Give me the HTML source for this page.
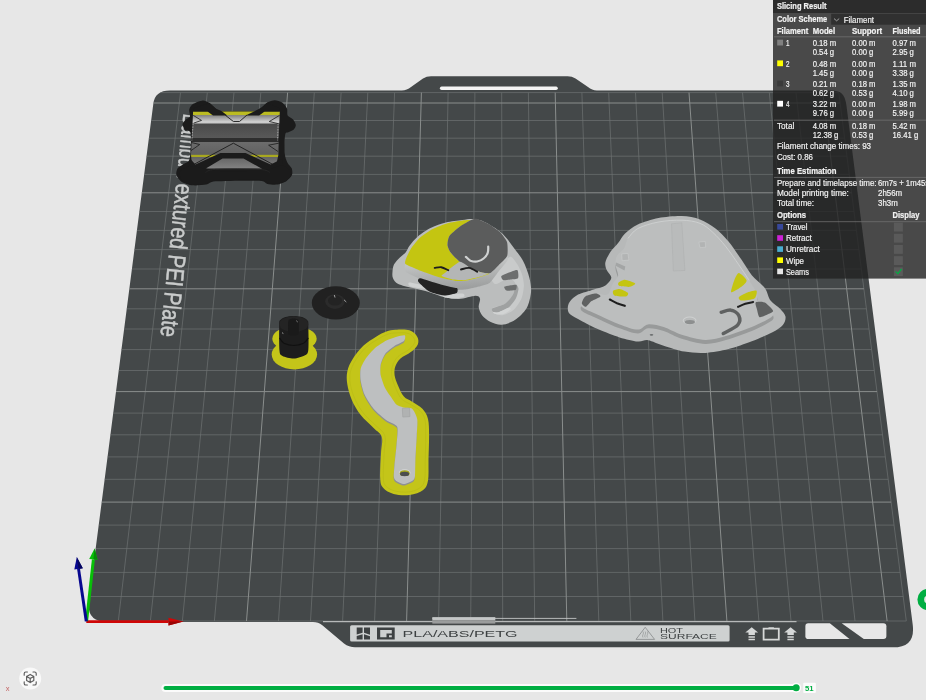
<!DOCTYPE html>
<html><head><meta charset="utf-8"><title>Slicing Result</title>
<style>
html,body{margin:0;padding:0;background:#e7e7e7;overflow:hidden}
body{width:926px;height:700px;position:relative;font-family:"Liberation Sans",sans-serif}
svg{position:absolute;left:0;top:0;display:block;will-change:transform}
text{font-family:"Liberation Sans",sans-serif}
</style></head><body>
<svg width="926" height="700" viewBox="0 0 926 700">
<defs><clipPath id="pc"><path d="M153.3 104 Q154.6 90.4 170 90.4 L401.8 90.4 Q407 90.4 411 87 L423 78.5 Q426.5 76.3 431 76.3 L567.6 76.3 Q572 76.3 575.5 78.5 L588 87 Q592 90.4 596.8 90.4 L831 90.4 C840.5 90.4 845 93.5 846.4 105 L912.7 624.5 C914.6 640 908.5 647.3 893 647.3 L355 647.3 Q349 647.3 344 643.5 L322 625 Q318.5 621.9 313 621.9 L107 621.9 Q85.9 621.9 89 600 Z"/></clipPath></defs>
<path d="M153.3 104 Q154.6 90.4 170 90.4 L401.8 90.4 Q407 90.4 411 87 L423 78.5 Q426.5 76.3 431 76.3 L567.6 76.3 Q572 76.3 575.5 78.5 L588 87 Q592 90.4 596.8 90.4 L831 90.4 C840.5 90.4 845 93.5 846.4 105 L912.7 624.5 C914.6 640 908.5 647.3 893 647.3 L355 647.3 Q349 647.3 344 643.5 L322 625 Q318.5 621.9 313 621.9 L107 621.9 Q85.9 621.9 89 600 Z" fill="#444849"/>
<rect x="439.9" y="86.6" width="117.9" height="3.4" rx="1.7" fill="#f4f4f4"/>
<g clip-path="url(#pc)">
<path d="M118.3 621L180.5 92.6M150.4 621L207.3 92.6M182.4 621L234 92.6M214.4 621L260.8 92.6M278.5 621L314.3 92.6M310.5 621L341.1 92.6M342.6 621L367.8 92.6M374.6 621L394.6 92.6M438.6 621L448.1 92.6M470.7 621L474.9 92.6M502.7 621L501.7 92.6M534.7 621L528.4 92.6M598.8 621L581.9 92.6M630.8 621L608.7 92.6M662.9 621L635.5 92.6M694.9 621L662.2 92.6M758.9 621L715.7 92.6M791 621L742.5 92.6M823 621L769.3 92.6M855 621L796 92.6M906.3 621L838.8 92.6M86.3 621L906.3 621M89.4 596.5L903.2 596.5M92.5 572.4L900.1 572.4M95.6 548.6L897 548.6M98.6 525.1L894 525.1M104.4 479.3L888.2 479.3M107.3 456.9L885.3 456.9M110.1 434.8L882.5 434.8M112.9 413.1L879.7 413.1M118.3 370.5L874.3 370.5M121 349.6L871.6 349.6M123.6 329L869 329M126.2 308.8L866.4 308.8M131.2 269L861.4 269M133.7 249.6L858.9 249.6M136.2 230.4L856.4 230.4M138.6 211.5L854 211.5M143.3 174.4L849.3 174.4M145.6 156.2L847 156.2M147.9 138.2L844.7 138.2M150.2 120.5L842.4 120.5M153.8 92.6L838.8 92.6" stroke="#6f7372" stroke-width="0.7" fill="none"/>
<path d="M246.5 621L287.6 92.6M406.6 621L421.4 92.6M566.8 621L555.2 92.6M726.9 621L689 92.6M887.1 621L822.8 92.6M101.5 502.1L891.1 502.1M115.6 391.6L877 391.6M128.7 288.8L863.9 288.8M141 192.8L851.6 192.8M152.4 103L840.2 103" stroke="#8a8e8d" stroke-width="1" fill="none"/>
</g>
<text transform="translate(183.5 113.3) rotate(95.9)" font-size="24.5" stroke="#c9cbcb" stroke-width="0.5" fill="#c9cbcb" lengthAdjust="spacingAndGlyphs" textLength="68.6">Bambu T</text>
<text transform="translate(176.3 182.9) rotate(95.9)" font-size="24.5" stroke="#c9cbcb" stroke-width="0.5" fill="#c9cbcb" lengthAdjust="spacingAndGlyphs" textLength="154">extured PEI Plate</text>
<path d="M323 621.7H796.5" stroke="#cfd1d1" stroke-width="1"/>
<rect x="432.3" y="617.1" width="63" height="3.2" fill="#c3c5c5"/>
<rect x="432.3" y="620.2" width="63" height="3.4" fill="#9a9c9c"/>
<path d="M432.3 618.4H576.4" stroke="#c4c6c6" stroke-width="0.9"/>
<rect x="350.1" y="625.2" width="379.5" height="16.3" rx="1.5" fill="#ced1d1"/>
<path d="M356.7 627.5h5.9v5.2l-5.9 1.9zM364 627.5h6v7.3l-6-2zM356.7 636.1l5.9-1.9v5.4h-5.9zM364 634.3l6 2v3.3h-6z" fill="#3d4142"/>
<path d="M377 627.5h17.7v12.1H377zM380.2 630h11.6v3.5h-5.3v3.7h-6.3zM389 635.3h2.8v2h-2.8z" fill="#3d4142" fill-rule="evenodd"/>
<text x="402.6" y="637.1" font-size="9.2" fill="#3d4142" textLength="115" lengthAdjust="spacingAndGlyphs">PLA/ABS/PETG</text>
<path d="M645.2 627.3L636 639.4H654.6Z" fill="none" stroke="#7d8081" stroke-width="0.7"/>
<path d="M643 637.5q-1-1.5 0-3t0-3M645.2 637.5q-1-1.5 0-3t0-3M647.4 637.5q-1-1.5 0-3t0-3" fill="none" stroke="#7d8081" stroke-width="0.5"/>
<text x="660" y="632.6" font-size="6.8" fill="#3d4142" textLength="23" lengthAdjust="spacingAndGlyphs">HOT</text>
<text x="660" y="639.4" font-size="6.8" fill="#3d4142" textLength="56.8" lengthAdjust="spacingAndGlyphs">SURFACE</text>
<path d="M751.7 627.2l6.4 5.2h-3.2v2.6h-6.4v-2.6h-3.2zM748.5 636.2h6.4v1.5h-6.4zM748.5 638.8h6.4v1.5h-6.4zM790.6 627.2l6.4 5.2h-3.2v2.6h-6.4v-2.6h-3.2zM787.4 636.2h6.4v1.5h-6.4zM787.4 638.8h6.4v1.5h-6.4z" fill="#d6d8d8"/>
<path d="M763.6 628.6h15.2v11h-15.2z" fill="none" stroke="#d6d8d8" stroke-width="1.8"/>
<path d="M768.5 627.3h5.4v1.3h-5.4z" fill="#d6d8d8"/>
<path d="M808.2 623.3H829.8L849.5 639.1H808.2Q805.4 639.1 805.4 636.3V626.1Q805.4 623.3 808.2 623.3Z" fill="#e7e7e7"/>
<path d="M841.7 623.3H883.4Q886.4 623.3 886.4 626.3V636.1Q886.4 639.1 883.4 639.1H863.8Z" fill="#e7e7e7"/>
<defs><linearGradient id="tw" x1="0" y1="111.3" x2="0" y2="168.3" gradientUnits="userSpaceOnUse">
<stop offset="0.000" stop-color="#bcbc22"/><stop offset="0.067" stop-color="#bcbc22"/><stop offset="0.074" stop-color="#858585"/><stop offset="0.186" stop-color="#d2d2d2"/><stop offset="0.205" stop-color="#c6c6c6"/><stop offset="0.224" stop-color="#4a4a4a"/><stop offset="0.464" stop-color="#585858"/><stop offset="0.476" stop-color="#2e2e2e"/><stop offset="0.536" stop-color="#2e2e2e"/><stop offset="0.543" stop-color="#6c6c6c"/><stop offset="0.757" stop-color="#606060"/><stop offset="0.762" stop-color="#a8a820"/><stop offset="0.793" stop-color="#a8a820"/><stop offset="0.798" stop-color="#626262"/><stop offset="0.988" stop-color="#808080"/>
</linearGradient></defs>
<path d="M189.3 109.3C189.7 107.5 191.5 105 193.3 103.8C195.1 102.6 200.7 100.5 202.8 100.4C205 100.3 207.9 102.1 209.6 103.1C211.3 104.2 214.2 107.5 215.7 108.6C217.3 109.6 215.9 110.7 221.1 111C226.4 111.3 249.6 111.5 255.1 111C260.5 110.5 260.2 108.4 261.9 107.2C263.5 106.1 265.6 103.4 267.3 102.5C269 101.5 272.8 100.2 274.8 100.2C276.7 100.2 280.6 101.3 282.2 102.5C283.8 103.6 286.2 106.9 287 108.6C287.7 110.3 286.8 113.9 287.6 115.4C288.5 116.8 292 118.2 293.1 119.4C294.2 120.7 295.7 123.5 295.8 124.9C295.9 126.2 294.8 128.6 293.8 129.6C292.8 130.6 289.5 131.7 288.3 132.3C287.2 133 285.7 131.8 285.2 134.6C284.7 137.4 284.3 149.6 284.7 153.4C285 157.1 286.7 160.9 287.6 162.9C288.6 164.9 291.1 166.7 291.7 168.3C292.3 169.9 292.7 173.4 292 175.1C291.3 176.8 288.3 179.9 286.3 181.2C284.3 182.5 279.3 184.2 276.8 184.6C274.3 184.9 269.6 184.4 267.3 183.9C264.9 183.4 266 181.1 259.1 180.8C252.3 180.4 222.8 180.8 215.7 181.3C208.7 181.8 209.3 184.1 206.2 184.6C203.1 185.1 195.9 185.6 192.6 185.3C189.4 184.9 184 183.2 181.8 181.9C179.6 180.5 176.9 176.9 176.4 175.1C175.8 173.3 176.8 169.7 177.7 168.3C178.6 166.8 181.6 165.5 183.1 164.2C184.7 163 188.7 162.9 189.7 158.8C190.7 154.7 191.2 137.1 190.6 133.3C190 129.5 186.3 131.5 185.2 130.3C184.1 129.1 182.4 125.6 182.5 124.2C182.6 122.7 184.9 120.4 185.9 119.4C186.9 118.4 189.5 118.1 189.9 116.7C190.4 115.4 188.8 111 189.3 109.3Z" fill="#1b1b1b"/>
<path d="M193.1 111.6L279.8 111.6L278.8 135.7L278.4 154.7L276.1 165.6L261.9 168.6L207.6 168.6L192 165.6L191 154.7Z" fill="url(#tw)"/>
<path d="M209.6 103.1L215.7 108.6L221.8 111.3L227.3 115.6L224.1 115.6L213 115.6L207.6 111.6L193.1 111.6L193.1 108.6Z" fill="#1b1b1b"/>
<path d="M267.3 102.5L261.9 107.2L255.1 111L245.6 115.6L249 115.6L259.1 115.6L264.6 111.6L279.8 111.6L279.8 108.6Z" fill="#1b1b1b"/>
<path d="M225.2 115.1L233.4 121.5L239.5 121.5L246.9 115.1" fill="none" stroke="#1b1b1b" stroke-width="0.9" stroke-linejoin="miter"/>
<path d="M191.3 165.8L233.4 143.2L275.4 165.8" fill="none" stroke="#1b1b1b" stroke-width="0.9"/>
<path d="M188.6 169L190.2 158.8L195.4 164.5L220.5 153.1L245.6 153.1L270.7 164.5L282.2 158.8L283.6 169L263.2 169.4L243.5 158.5L222.5 158.5L204.2 169.4Z" fill="#1b1b1b"/>
<path d="M193.3 115.4L201.5 120.4L193.7 123.1" fill="none" stroke="#1b1b1b" stroke-width="0.8"/>
<path d="M191.3 142.5L199.7 144.5L190.6 150.9" fill="none" stroke="#1b1b1b" stroke-width="0.8"/>
<path d="M279.5 115.4L269.3 121.5L278.8 123.8" fill="none" stroke="#1b1b1b" stroke-width="0.8"/>
<path d="M278.8 143.2L268.6 145.2L278.1 151.6" fill="none" stroke="#1b1b1b" stroke-width="0.8"/>
<path d="M193.1 124.2L191.8 140.5" stroke="#e8e8e8" stroke-width="0.8" stroke-dasharray="0.7 0.9" fill="none"/>
<path d="M278.1 124.2L277.6 140.5" stroke="#e8e8e8" stroke-width="0.8" stroke-dasharray="0.7 0.9" fill="none"/>
<path d="M180.4 171C181.7 169.1 187.8 166.5 191.3 166.3C194.7 166 203 168.3 206.2 169C209.5 169.6 208.7 170.7 215.7 171C222.8 171.3 251.9 171.3 259.1 171C266.4 170.7 266.9 169.7 270 169C273.1 168.2 279.5 165.3 282.2 165.6C284.9 165.8 289.3 169.6 290.4 171C291.4 172.5 291.3 175 290.4 176.4C289.5 177.9 286.3 181 283.6 181.9C280.9 182.8 273.3 183.5 270 183.2C266.7 182.9 266.4 180.2 259.1 179.8C251.9 179.5 223 180 215.7 180.5C208.5 181 208.1 183.4 204.9 183.9C201.6 184.4 194.4 185 191.3 184.6C188.2 184.1 183.2 182.3 181.8 180.5C180.3 178.7 179.2 172.9 180.4 171Z" fill="#1b1b1b"/>
<path d="M205.5 172.4C207.2 171.9 206.8 169.9 215.7 169.4C224.7 168.9 250.1 168.9 259.1 169.4C268.2 169.9 268.2 171.9 270 172.4" fill="none" stroke="#262626" stroke-width="1"/>
<ellipse cx="335.8" cy="302.9" rx="24" ry="16.6" fill="#212121"/>
<ellipse cx="335" cy="301.6" rx="9.8" ry="7.4" fill="#2b2b2b"/>
<ellipse cx="335" cy="300.6" rx="7" ry="5" fill="#232323"/>
<path d="M334.3 295L335 297.5M344 299.8L346.3 302" stroke="#d8d8d8" stroke-width="0.7" fill="none"/>
<ellipse cx="294.5" cy="338.8" rx="22.2" ry="12.3" fill="#c4c519"/>
<ellipse cx="294.4" cy="354.5" rx="22.7" ry="15" fill="#c4c519"/>
<path d="M279.2 324.5C279.3 320.4 279.4 321 280.3 320C281.1 319 283.7 317.6 285.5 317C287.3 316.5 291.5 315.9 293.8 316C296.1 316 300.9 316.7 302.8 317.3C304.6 318 307 319.7 307.7 320.8C308.5 321.8 308.2 321.4 308.3 325.3C308.4 329.2 308.8 346 308.3 350C307.9 354 307 354.1 305 355.3C303.1 356.4 296.8 358.5 293.8 358.6C290.8 358.7 284.4 357.1 282.5 356C280.6 355 279.9 355 279.5 350.8C279.1 346.6 279.1 328.6 279.2 324.5Z" fill="#1d1d1d"/>
<ellipse cx="293.8" cy="324.2" rx="14.5" ry="8" fill="#242424"/>
<path d="M288.2 321.5C288.5 319.7 289.3 319.7 290 319.3C290.8 318.9 292.8 318.5 293.8 318.5C294.8 318.5 296.9 318.9 297.5 319.3C298.2 319.7 298.6 319.7 298.7 321.5C298.9 323.3 299 331 298.7 332.8C298.5 334.6 297.5 334.6 296.8 335C296 335.4 294.2 335.6 293.3 335.6C292.4 335.6 290.7 335.4 290 335C289.3 334.6 288.5 334.6 288.2 332.8C288 331 288 323.3 288.2 321.5Z" fill="#1a1a1a"/>
<path d="M279.5 338C280.3 338.9 281.6 342 284 343.3C286.4 344.5 290.5 345.5 293.8 345.5C297 345.5 301.1 344.5 303.5 343.3C305.9 342 307.5 338.9 308.3 338" fill="none" stroke="#111" stroke-width="1.2"/>
<path d="M296.5 320.9L297.5 321.8M282.2 332.8L283.3 333.5" stroke="#ddd" stroke-width="0.8" fill="none"/>
<path d="M395.4 329.8C399.3 329.6 405.9 329.1 409.5 330.3C413.2 331.4 415.9 334.3 417.2 336.7C418.6 339.1 418.8 341.8 417.8 344.4C416.7 347 413.7 349.8 410.8 352.1C407.9 354.5 403.1 356.2 400.5 358.6C398 360.9 396.4 363.5 395.4 366.3C394.4 369 394.2 372 394.6 375.3C395.1 378.5 396.4 382 398 385.5C399.5 389.1 401.5 393.9 403.9 396.6C406.2 399.3 409 399.7 412.1 401.7C415.2 403.7 419.7 405.8 422.4 408.7C425 411.5 426.9 414.4 428 418.9C429.1 423.4 429 428.6 429.1 435.7C429.1 442.7 428.7 453.9 428.5 461.4C428.4 468.8 428.9 475.8 428 480.6C427.1 485.4 426.2 487.7 423.2 490.1C420.1 492.5 414.5 494.4 409.5 495C404.6 495.7 398 495.2 393.6 494C389.2 492.8 385.3 490.5 383.1 487.8C380.8 485.2 380.6 483.8 380.2 478.1C379.9 472.4 380.7 460.5 381 453.6C381.3 446.8 383 441.2 381.8 436.9C380.5 432.7 377.1 431.6 373.6 427.9C370 424.3 364.3 419.8 360.7 415.1C357.1 410.4 353.9 404.8 351.7 399.7C349.5 394.5 348.1 389 347.3 384.3C346.6 379.5 346.4 375.7 347.3 371.4C348.3 367.1 350.3 362.8 353 358.6C355.6 354.3 359.4 349.3 363.3 345.7C367.1 342.1 372.3 339.1 376.1 336.7C380 334.3 383.2 332.7 386.4 331.6C389.6 330.4 391.5 330 395.4 329.8Z" fill="#c4c519"/>
<path d="M396.2 332.9C399.6 332.7 405.2 332.4 408.2 333.4C411.2 334.3 413.2 336.8 414.2 338.5C415.1 340.2 415.1 341.7 414.2 343.6C413.2 345.6 410.9 347.9 408.2 350.1C405.5 352.2 400.6 353.9 398 356.5C395.4 359.1 393.6 362.3 392.6 365.5C391.5 368.7 391.4 372.2 391.8 375.8C392.2 379.3 393.6 383 395.1 386.8C396.7 390.6 398.8 395.7 401.3 398.6C403.8 401.6 407.2 402.3 410.3 404.3C413.4 406.3 417.4 407.9 419.8 410.5C422.3 413 424 415.5 425 419.7C425.9 423.9 425.7 428.7 425.7 435.7C425.8 442.6 425.4 454.1 425.2 461.4C425 468.6 425.5 475 424.7 479.3C423.9 483.7 422.9 485.5 420.3 487.6C417.7 489.7 413.3 491.4 409 491.9C404.7 492.5 398.5 491.9 394.6 490.9C390.7 489.9 387.5 488 385.6 485.8C383.7 483.5 383.6 482.9 383.3 477.5C383.1 472.2 383.8 460.6 384.1 453.6C384.3 446.7 386.3 440.4 384.9 435.7C383.4 430.9 379.2 429.1 375.6 425.4C372 421.6 366.7 417.5 363.3 413C359.8 408.6 356.9 403.4 354.8 398.6C352.6 393.8 351.1 388.7 350.4 384.3C349.7 379.8 349.5 376 350.4 371.9C351.3 367.8 353.3 363.9 355.8 359.8C358.3 355.8 361.9 351.2 365.6 347.8C369.2 344.3 374 341.5 377.7 339.3C381.3 337 384.3 335.5 387.4 334.4C390.5 333.3 392.7 333 396.2 332.9Z" fill="none" stroke="#b3b410" stroke-width="0.6" opacity="0.7"/>
<path d="M404.7 337C405.5 337.5 404.9 341.4 403.7 342.7C402.4 343.9 396.1 346.3 393.9 347.8C391.7 349.3 386.5 353.4 384.9 355.5C383.4 357.6 381.1 363.3 380.5 365.8C380 368.3 380 374.1 380.5 376.9C381.1 379.6 383.5 386.9 384.9 389.7C386.3 392.6 391.3 399.3 392.6 401.3C394 403.2 395.3 405.5 396.5 406.4C397.7 407.3 401.1 408.5 402.9 409C404.7 409.4 410.3 408.9 411.9 410.3C413.6 411.6 416.5 417.4 417 420.5C417.6 423.7 416.7 432.6 416.5 437.3C416.3 441.9 415.5 455.6 415.2 460.4C415 465.2 415.1 475.8 414.7 478.4C414.3 481 413.2 481.6 411.9 482.5C410.6 483.3 405.5 485.6 403.7 485.6C401.8 485.6 397.1 483.3 396 482.5C394.8 481.6 393.8 480.4 393.7 478.4C393.5 476.4 394.1 469.4 394.4 465.5C394.8 461.6 396.2 449.3 396.5 445C396.8 440.6 398.2 431 397 428.3C395.8 425.6 389 423.9 386.2 421.8C383.4 419.7 375.9 413.3 373.4 410.3C370.8 407.3 365.9 399.4 364.4 396.1C362.9 392.8 361 385 360.5 382C360.1 379 359.9 373 360.5 370.4C361.1 367.9 364 362.5 365.6 360.2C367.3 357.8 372.2 352 374.6 349.9C377 347.8 383.7 343.5 386.2 342.2C388.7 340.8 394.3 338.9 396.5 338.3C398.6 337.7 403.9 336.5 404.7 337Z" fill="#8f9191"/>
<path d="M404.9 335.4C405.7 335.9 405.1 339.8 403.9 341.1C402.6 342.3 396.3 344.7 394.1 346.2C391.9 347.7 386.7 351.8 385.1 353.9C383.6 356 381.3 361.7 380.7 364.2C380.2 366.7 380.2 372.5 380.7 375.3C381.3 378 383.7 385.3 385.1 388.1C386.5 391 391.5 397.7 392.8 399.7C394.2 401.6 395.5 403.9 396.7 404.8C397.9 405.7 401.3 406.9 403.1 407.4C404.9 407.8 410.5 407.3 412.1 408.7C413.8 410 416.7 415.8 417.2 418.9C417.8 422.1 416.9 431 416.7 435.7C416.5 440.3 415.7 454 415.4 458.8C415.2 463.6 415.3 474.2 414.9 476.8C414.5 479.4 413.4 480 412.1 480.9C410.8 481.7 405.7 484 403.9 484C402 484 397.3 481.7 396.2 480.9C395 480 394 478.8 393.9 476.8C393.7 474.8 394.3 467.8 394.6 463.9C395 460 396.4 447.7 396.7 443.4C397 439 398.4 429.4 397.2 426.7C396 424 389.2 422.3 386.4 420.2C383.6 418.1 376.1 411.7 373.6 408.7C371 405.7 366.1 397.8 364.6 394.5C363.1 391.2 361.2 383.4 360.7 380.4C360.3 377.4 360.1 371.4 360.7 368.8C361.3 366.3 364.2 360.9 365.8 358.6C367.5 356.2 372.4 350.4 374.8 348.3C377.2 346.2 383.9 341.9 386.4 340.6C388.9 339.2 394.5 337.3 396.7 336.7C398.8 336.1 404.1 334.9 404.9 335.4Z" fill="#bdbfc0"/>
<ellipse cx="404.7" cy="472.8" rx="5.8" ry="3.5" fill="#d6d8d8"/>
<ellipse cx="404.7" cy="473.2" rx="5" ry="2.9" fill="#a3a51e"/>
<ellipse cx="404.6" cy="474" rx="4.6" ry="2.2" fill="#4b4e4f"/>
<path d="M402.3 408.4L409.5 407.9L410 416.6L402.8 417.1Z" fill="#b0b2b2" stroke="#9a9c9c" stroke-width="0.5"/>
<path d="M392.5 271.7C392.6 269.6 393 266.4 394.1 264.3C395.2 262.1 398.1 259.2 399.9 257.4C401.6 255.6 404.1 254.3 405.6 252.5C407.1 250.7 407.9 247.8 409.7 245.4C411.6 243 414.7 239 417.9 236.4C421.1 233.7 426.9 229.9 431.1 227.8C435.3 225.7 441.2 223.6 445.9 222.4C450.5 221.2 458.3 220.4 462.3 219.9C466.2 219.4 469.2 218.8 472.1 218.9C475.1 219.1 478.5 219.4 482 220.7C485.4 222.1 491.7 225.8 495.1 228.1C498.6 230.5 502.3 233.5 505 236.4C507.7 239.2 510.5 243.3 513.2 247C515.9 250.7 520.7 256.4 523.1 261C525.5 265.6 528.1 272.7 529.3 277.4C530.5 282.1 531.4 287.5 531 292.2C530.5 296.9 528.8 304.5 526.4 308.6C523.9 312.8 518.6 317.7 514.9 320.1C511.2 322.6 505.4 324.5 501.7 324.7C498 325 493.2 323.2 490.2 321.8C487.3 320.4 483.7 317.4 482 315.2C480.3 313 479 309.5 478.7 307C478.4 304.5 480.5 300.5 480 298.8C479.5 297.1 478.6 295.8 475.4 295.8C472.3 295.9 463.7 298.9 459 299.1C454.3 299.3 448.6 298.2 444.2 297.1C439.8 296.1 434.1 293.6 429.4 292.2C424.7 290.9 417.7 289.3 413 288.1C408.3 286.9 401.2 285.5 398.2 284C395.2 282.5 393.8 280.1 393 278.2C392.1 276.4 392.3 273.8 392.5 271.7Z" fill="#bbbdbd"/>
<path d="M490.5 276.1C491 274 496.4 270.5 498.4 268.4C500.5 266.3 504.1 261.7 505.8 260.2C507.5 258.6 509.7 256.3 511.2 256.9C512.8 257.4 515.9 262 517.3 264.3C518.7 266.6 521 271.3 521.9 274.1C522.8 277 524 282.4 523.9 285.6C523.8 288.9 522.8 295.5 521.4 298.8C520 302 516.1 307.8 513.5 310C511 312.1 505 314.7 502.5 315.2C500 315.7 496.2 314.5 494.8 313.6C493.4 312.7 490.8 309.6 492.2 308.3C493.5 307 502.2 305.5 505 303.7C507.8 301.9 511.5 297.2 512.9 294.7C514.3 292.2 515.7 286.8 515.7 284.8C515.6 282.8 514 280.4 512.4 279.9C510.7 279.3 505.7 280.2 503.4 280.7C501.1 281.3 496.9 284.6 495.1 284C493.4 283.4 490.1 278.2 490.5 276.1Z" fill="#c9cbcb"/>
<path d="M492.5 308.3C494.1 307.2 502.3 305.5 505 303.7C507.7 301.9 511.4 297.1 512.9 294.7C514.4 292.2 515.4 286.1 516.2 285.3C516.9 284.5 518.5 287.1 518.5 288.9C518.4 290.7 517 296.3 515.7 298.8C514.3 301.3 510.6 306 508.3 307.8C506 309.6 500.4 311.7 498.4 312.3C496.4 312.8 494 312.5 493.2 311.9C492.4 311.4 490.9 309.4 492.5 308.3Z" fill="#9fa1a1"/>
<path d="M493.2 311.9C493.6 311.7 496.4 312.8 498.4 312.3C500.4 311.7 506.6 308.2 508.3 307.8C509.9 307.4 511.4 308.7 510.7 309.5C510.1 310.3 505.4 313.3 503.4 313.9C501.3 314.5 496.5 314.3 495.1 314.1C493.8 313.8 492.7 312.2 493.2 311.9Z" fill="#d2d4d4"/>
<path d="M501.4 276.1C502.1 275.2 507.2 273.2 509.1 272.5C511 271.8 516.3 269.4 517.3 270C518.4 270.7 518.7 277.2 518 278.2C517.2 279.3 512.5 279.2 510.7 279.4C509 279.6 504.4 280.6 503.4 280.2C502.3 279.8 500.7 277 501.4 276.1Z" fill="#6c6e6e"/>
<path d="M504.2 286.8C504.7 286.2 509.3 285.5 510.7 285.3C512.2 285.1 515.9 284.3 516.5 284.8C517.1 285.3 516.5 289.1 515.8 289.7C515.2 290.4 511.9 290.3 510.7 290.4C509.6 290.5 507.1 291 506.3 290.6C505.5 290.1 503.7 287.4 504.2 286.8Z" fill="#6c6e6e"/>
<path d="M409.4 282.4C411.4 282.3 423.3 285.1 425.3 286C427.4 286.8 426.8 288.9 424.8 288.9C422.9 289 412.6 287.3 410.5 286.5C408.5 285.6 407.4 282.4 409.4 282.4Z" fill="#d0d2d2"/>
<path d="M443.4 295.2C445.7 294.6 459.5 293.3 462.3 293.5C465 293.7 465 296.2 463.9 296.8C462.8 297.5 456.6 298.4 454.1 298.5C451.6 298.5 446.5 297.9 445 297.5C443.6 297 441.1 295.7 443.4 295.2Z" fill="#d0d2d2"/>
<defs><linearGradient id="cw" x1="0" y1="0" x2="0.15" y2="1"><stop offset="0" stop-color="#cfd1d1"/><stop offset="1" stop-color="#9d9f9f"/></linearGradient></defs>
<path d="M405.4 264C406.6 263.8 416.6 269.1 419.6 270.2C422.5 271.3 437.9 276.7 440.9 277.6C443.9 278.5 453.5 280.5 455.7 280.7C457.9 280.9 465.3 280.7 467.2 280.4C469.1 280.1 476.9 278 478.7 277.4C480.6 276.9 487.7 274.8 489.4 273.8C491 272.8 497 267.1 498.4 265.6C499.9 264.1 506.2 256.2 507 255.7C507.7 255.3 508.2 259 507.6 260.2C507 261.4 501.2 268.2 499.7 270C498.3 271.9 491.6 281.3 489.9 282.7C488.1 284.1 480.6 286.1 478.7 286.6C476.8 287.2 469.1 289 467.2 289.3C465.3 289.5 457.9 290.2 455.7 289.9C453.5 289.6 443.9 286.8 440.9 285.8C437.9 284.9 422.5 279.7 419.6 278.6C416.6 277.4 406.9 273.2 405.8 272C404.6 270.8 404.3 264.1 405.4 264Z" fill="url(#cw)"/>
<path d="M420.4 278.2C422.5 278.5 436 283.1 439.3 284C442.6 284.9 451.4 287.2 453.2 287.6C455.1 288.1 457 287.9 457.4 288.4C457.7 289 458 292.2 456.7 292.9C455.4 293.6 446.9 295.6 444.2 295.5C441.5 295.4 432 292.9 429.4 291.6C426.8 290.2 419.2 283 418.3 281.7C417.4 280.4 418.3 278 420.4 278.2Z" fill="#232323"/>
<path d="M405.4 264C404.3 262.9 405.9 259.1 406.4 257.7C406.9 256.4 410.2 249.6 411.4 247.9C412.5 246.1 418.6 238.8 420.4 237.2C422.2 235.6 430.5 230.1 432.7 229C435 227.8 445 223.9 447.5 223.2C450 222.5 460.4 220.7 462.3 220.4C464.2 220.2 470.8 219.7 470.5 220.3C470.2 220.8 460.8 226 459 227.3C457.2 228.7 450.1 234.9 449.1 236.4C448.2 237.9 447.4 244 447.5 245.4C447.6 246.8 449.8 251.4 450.8 252.8C451.8 254.2 458 260.5 459.8 261.8C461.6 263.2 470.3 268.3 472.1 269.2C474 270.1 480.6 272.1 482 272.5C483.4 272.9 489.7 273.4 489.4 273.8C489.1 274.2 480.6 277 478.7 277.6C476.9 278.2 469.1 280.3 467.2 280.5C465.3 280.8 457.9 281.1 455.7 280.9C453.5 280.6 443.9 278.6 440.9 277.8C437.9 276.9 422.5 271.5 419.6 270.4C416.6 269.2 406.5 265 405.4 264Z" fill="#c4c511"/>
<path d="M470.5 220.3C472.3 219.4 475.3 218.6 477.1 218.9C478.9 219.3 486.3 222.7 488.6 224C490.9 225.4 498.2 230.4 500.1 232.2C501.9 234.1 506.3 239.7 507 242.1C507.7 244.5 508 253.7 507.1 256.1C506.3 258.4 500.1 263.7 498.4 265.4C496.7 267.1 491.9 272.3 490.2 273C488.6 273.7 483.8 272.9 482 272.5C480.2 272.1 474.4 270.3 472.1 269.2C469.9 268.1 462 263.5 459.8 261.8C457.7 260.2 452 254.4 450.8 252.8C449.6 251.1 447.7 247 447.5 245.4C447.3 243.7 448 238.2 449.1 236.4C450.3 234.5 456.9 228.9 459 227.3C461.1 225.7 468.7 221.1 470.5 220.3Z" fill="#5b5c5c"/>
<path d="M459.8 261.8C462 261.5 470.3 268.3 472.1 269.2C474 270.1 480.6 272.1 482 272.5C483.4 272.9 488.8 273.4 488.6 273.8C488.3 274.2 480.6 276.6 478.7 277.1C476.8 277.6 467.8 279.9 465.6 280.1C463.4 280.2 454.4 279.7 452.4 279.4C450.4 279.1 442.2 276.7 441.6 276.1C441 275.5 444 273.7 445.5 272.5C447 271.3 457.6 262.1 459.8 261.8Z" fill="#b4b6b6"/>
<path d="M465.9 256.9C466.7 257.5 468.6 259.9 470.5 260.7C472.4 261.4 474.9 261.8 477.1 261.5C479.3 261.1 481.9 260 483.6 258.5C485.4 257.1 487 254.8 487.7 252.8C488.5 250.8 488.2 247.6 488.2 246.5" fill="none" stroke="#cfd1d1" stroke-width="2.2" stroke-linecap="round"/>
<path d="M434.7 267.9C435.8 267.8 439 266.9 441.3 267.2C443.5 267.6 447.1 269.7 448.3 270.2" fill="none" stroke="#1e1e1e" stroke-width="1.9" stroke-linecap="round"/>
<path d="M461 269.5C462.3 269.3 466.5 267.5 469.2 267.9C471.9 268.3 475.8 271 477.1 271.7" fill="none" stroke="#1e1e1e" stroke-width="1.9" stroke-linecap="round"/>
<path d="M567.8 308.9C567.7 307 568 304 569.6 301.9C571.1 299.7 574.5 296.5 578.1 294.6C581.8 292.7 589.6 290.8 593.7 289.4C597.8 288.1 602.7 287.3 605.4 285.5C608 283.8 611.1 280.1 611.3 277.8C611.5 275.4 607.6 272.3 606.7 270C605.8 267.7 604.8 264.9 605.4 262.2C605.9 259.5 608.6 254.8 610.5 251.8C612.5 248.9 616.2 245.5 618.3 242.8C620.5 240 621.9 236.4 624.8 233.7C627.7 231 632.7 227 637.8 224.6C642.8 222.3 651.9 219.4 658.5 218.1C665.1 216.9 675.6 215.9 681.8 216.1C688 216.3 694.9 217.6 700 219.4C705 221.3 711.2 225.2 715.5 228.5C719.8 231.8 724.6 236.8 728.5 241.5C732.4 246.1 737.9 254.6 741.4 259.6C744.9 264.7 748.3 270.9 751.8 275.2C755.3 279.4 762 284.3 764.8 288.1C767.6 291.9 768.1 297.5 770.5 300.6C772.8 303.7 778.1 306.5 780.3 308.9C782.6 311.3 785.1 314.2 785.5 316.6C785.9 319.1 784.9 322.6 782.9 324.9C781 327.3 777.2 329.7 772.5 332.2C767.9 334.6 758.4 338.7 751.8 341.3C745.2 343.8 735.5 347.3 728.5 349C721.5 350.8 711.8 352.5 705.2 352.9C698.5 353.3 690.6 352.7 684.4 351.6C678.2 350.5 669.1 347.4 663.7 345.7C658.2 344 652 340.9 648.1 340.2C644.2 339.6 642 342 637.8 341.5C633.5 341.1 625.4 339.2 619.6 337.4C613.8 335.6 604.7 332.1 598.9 329.6C593 327.1 585 322.8 580.7 320.5C576.5 318.3 572.3 316.3 570.4 314.6C568.4 312.8 567.9 310.8 567.8 308.9Z" fill="#b7b9b9"/>
<path d="M580.7 307.6C580.9 306 582.3 302.9 584.6 301.4C587 299.8 592.9 297.6 596.3 297.2C599.7 296.8 604.9 300.1 607.4 298.5C610 297 611.5 289.7 613.1 286.8C614.7 284 617.7 282.3 618.1 279.6C618.4 276.9 615.6 271.7 615.5 268.7C615.3 265.7 615.7 262.2 617 259.6C618.3 257.1 622.6 254.5 624.3 251.9C625.9 249.2 625.9 245.2 627.9 242.3C629.9 239.3 633.2 234.9 637.8 232.4C642.3 230 651.9 227.2 658.5 225.9C665.1 224.7 675.6 223.9 681.8 224.1C688 224.3 695.3 225.4 700 227.2C704.6 229.1 709 232.8 712.9 236.3C716.8 239.8 722 245.7 725.9 250.6C729.8 255.4 735.3 263.6 738.8 268.7C742.3 273.8 746.5 280 749.2 284.3C751.9 288.5 755.7 294 757 297.2C758.2 300.4 756 304 757.5 305.5C759.1 307.1 765 306.1 767.4 307.6C769.7 309.1 772.5 313.3 773.1 315.4C773.6 317.4 774.4 318.7 771.2 321.1C768.1 323.4 758.6 328.1 751.8 330.9C745 333.7 732.9 338 725.9 340C718.9 341.9 711.8 344.1 705.2 343.9C698.5 343.7 688 340.6 681.8 338.7C675.6 336.7 668.7 332.5 663.7 330.9C658.6 329.4 652 327.9 648.1 328.3C644.2 328.7 642 333.5 637.8 333.5C633.5 333.5 625.4 330.5 619.6 328.3C613.8 326.2 604.3 321.7 598.9 319.2C593.4 316.8 586 313.7 583.3 312C580.6 310.2 580.5 309.2 580.7 307.6Z" fill="#989a9a"/>
<path d="M580.7 303.7C580.9 302.1 582.3 299 584.6 297.5C587 295.9 592.9 293.7 596.3 293.3C599.7 292.9 604.9 296.2 607.4 294.6C610 293.1 611.5 285.8 613.1 282.9C614.7 280.1 617.7 278.4 618.1 275.7C618.4 273 615.6 267.8 615.5 264.8C615.3 261.8 615.7 258.3 617 255.7C618.3 253.2 622.6 250.6 624.3 248C625.9 245.3 625.9 241.3 627.9 238.4C629.9 235.4 633.2 231 637.8 228.5C642.3 226.1 651.9 223.3 658.5 222C665.1 220.8 675.6 220 681.8 220.2C688 220.4 695.3 221.5 700 223.3C704.6 225.2 709 228.9 712.9 232.4C716.8 235.9 722 241.8 725.9 246.7C729.8 251.5 735.3 259.7 738.8 264.8C742.3 269.9 746.5 276.1 749.2 280.4C751.9 284.6 755.7 290.1 757 293.3C758.2 296.5 756 300.1 757.5 301.6C759.1 303.2 765 302.2 767.4 303.7C769.7 305.2 772.5 309.4 773.1 311.5C773.6 313.5 774.4 314.8 771.2 317.2C768.1 319.5 758.6 324.2 751.8 327C745 329.8 732.9 334.1 725.9 336.1C718.9 338 711.8 340.2 705.2 340C698.5 339.8 688 336.7 681.8 334.8C675.6 332.8 668.7 328.6 663.7 327C658.6 325.5 652 324 648.1 324.4C644.2 324.8 642 329.6 637.8 329.6C633.5 329.6 625.4 326.6 619.6 324.4C613.8 322.3 604.3 317.8 598.9 315.3C593.4 312.9 586 309.8 583.3 308.1C580.6 306.3 580.5 305.3 580.7 303.7Z" fill="#bcbebe"/>
<path d="M627.9 238.4C629.6 236.7 632.7 231.2 637.8 228.5C642.9 225.8 651.2 223.4 658.5 222C665.8 220.6 674.9 220 681.8 220.2C688.7 220.4 694.8 221.3 700 223.3C705.2 225.4 708.6 228.5 712.9 232.4C717.2 236.3 721.6 241.3 725.9 246.7C730.2 252.1 735 259.2 738.8 264.8C742.7 270.4 747.5 277.8 749.2 280.4" fill="none" stroke="#d2d4d4" stroke-width="0.8"/>
<path d="M671.5 223.8L681.8 222.8L684.9 270.5L673.3 271Z" fill="#b9bbbb" stroke="#adafaf" stroke-width="0.5"/>
<path d="M698.9 242L705.2 241.5L705.7 247.2L700 247.7Z" fill="#b2b4b4" stroke="#cfd1d1" stroke-width="0.5"/>
<path d="M621.7 253.9L627.9 253.4L628.9 260.1L622.2 260.7Z" fill="#b2b4b4" stroke="#cfd1d1" stroke-width="0.5"/>
<path d="M616.2 262.5L625.3 266.6L624.5 270.5L615.7 265.8Z" fill="#a3a5a5"/>
<ellipse cx="689.6" cy="320.5" rx="6.8" ry="4" fill="#cfd1d1"/>
<ellipse cx="689.6" cy="320.8" rx="5.9" ry="3.3" fill="#b9bbbb"/>
<ellipse cx="689.9" cy="322.1" rx="5" ry="2.1" fill="#8d8f8f"/>
<ellipse cx="651.5" cy="334.8" rx="1.8" ry="0.9" fill="#6a6d6e"/>
<path d="M618.3 282.9C618.9 282.2 622.8 279.8 624.8 279.8C626.8 279.9 634.6 282.6 635.2 283.5C635.8 284.3 631.8 286.5 630 286.8C628.2 287.1 621 286.5 619.6 286.1C618.3 285.6 617.7 283.7 618.3 282.9Z" fill="#c4c511"/>
<path d="M613.1 290.7C613.7 290 617.9 288.7 619.6 288.9C621.3 289.1 627.2 291.9 627.9 292.8C628.7 293.7 627.7 296.1 626.1 296.4C624.5 296.7 615.9 296.1 614.4 295.4C612.9 294.7 612.5 291.5 613.1 290.7Z" fill="#c4c511"/>
<path d="M731.1 290.7C731.3 289.4 733.3 282.4 734.2 280.4C735.1 278.3 737.4 273.1 738.8 273.1C740.3 273.1 746.3 278.7 746.6 280.4C746.9 282 743.1 285.5 741.4 286.8C739.8 288.2 733.6 291.6 732.4 292C731.2 292.5 730.9 292.1 731.1 290.7Z" fill="#c4c511"/>
<path d="M738.8 297.2C739.5 296.3 744.6 293.6 746.6 292.8C748.7 292 755.6 290.1 756.5 290.7C757.4 291.4 756.2 297.3 754.4 298.5C752.6 299.6 743.3 300.7 741.4 300.6C739.6 300.4 738.2 298.1 738.8 297.2Z" fill="#c4c511"/>
<path d="M581.8 303.2C581.7 302 583.8 297.5 585.4 296.4C587 295.3 594 293.6 595.8 293.6C597.5 293.6 600.9 295.5 600.4 296.4C600 297.3 593.3 299.9 591.6 301.1C589.9 302.3 587.1 306.5 585.9 306.8C584.8 307 581.8 304.4 581.8 303.2Z" fill="#5f6161"/>
<path d="M755.7 302.4C756.6 301.6 762.7 301.6 764.8 302.6C766.8 303.6 772.8 309.5 773.1 310.9C773.4 312.3 768.9 313.8 767.4 314.6C765.8 315.3 760.8 317.8 759.6 317.2C758.4 316.6 757.4 311.1 757 309.4C756.5 307.7 754.8 303.2 755.7 302.4Z" fill="#5f6161"/>
<path d="M609.8 299.5C611 300.1 614.5 302.1 617 303.2C619.5 304.2 623.5 305.3 624.8 305.8" fill="none" stroke="#1e1e1e" stroke-width="2.1" stroke-linecap="round"/>
<path d="M738.1 306.8C739.3 306.3 742.8 304.5 745.3 303.7C747.8 302.9 751.8 302.4 753.1 302.1" fill="none" stroke="#1e1e1e" stroke-width="2.1" stroke-linecap="round"/>
<path d="M721.2 312.2C722.9 311.9 728.1 309.6 731.1 310.2C734 310.7 737.7 313.1 738.8 315.6C740 318.1 740.4 322 737.8 324.9C735.2 327.9 725.7 332.1 723.3 333.5" fill="none" stroke="#5f6161" stroke-width="3.5" stroke-linecap="round"/>
<path d="M86.3 622.9L168.5 622.9L168.5 620.3L86.3 620.3Z" fill="#cf0606"/>
<path d="M168.5 625.5L183.5 621.6L168.5 617.7Z" fill="#cf0606"/>
<path d="M168.5 625.5L183.5 621.6L168.5 621.6Z" fill="#9a0404"/>
<path d="M88.1 621.2L94.9 559.5L91.9 559.2L85.1 620.8Z" fill="#08bf08"/>
<path d="M97.6 559.8L94.6 548.4L89.2 558.9Z" fill="#08bf08"/>
<path d="M97.6 559.8L94.6 548.4L93.4 559.3Z" fill="#078a07"/>
<path d="M87.8 621.2L80 568.7L77.1 569.1L84.8 621.6Z" fill="#07078f"/>
<path d="M82.8 568.2L76.8 557L74.3 569.5Z" fill="#07078f"/>
<path d="M82.8 568.2L76.8 557L78.6 568.9Z" fill="#04045c"/>
<circle cx="927.95" cy="599.5" r="7.2" fill="none" stroke="#00ae42" stroke-width="6.7"/>
<rect x="161.4" y="683.9" width="639" height="8.2" rx="4.1" fill="#fbfbfb"/>
<circle cx="796.2" cy="687.8" r="5" fill="#fbfbfb"/>
<rect x="163.5" y="686" width="633" height="4" rx="2" fill="#00ae42"/>
<circle cx="796.2" cy="687.8" r="3.5" fill="#00ae42"/>
<rect x="803.2" y="682.7" width="12.7" height="10.2" rx="1" fill="#fbfbfb"/>
<text x="805" y="690.5" font-size="7.8" font-weight="bold" fill="#00ae42" textLength="8.6" lengthAdjust="spacingAndGlyphs">51</text>
<circle cx="30.2" cy="678.5" r="11" fill="#f9f9f9"/>
<g fill="none" stroke="#5c5c5c" stroke-width="1.15" stroke-linecap="round" stroke-linejoin="round">
<path d="M24.2 675.2v-1.6q0-1.6 1.6-1.6h1.6M33 672h1.6q1.6 0 1.6 1.600v1.600M36.200 681.800v1.600q0 1.600-1.600 1.600h-1.600M27.400 685h-1.600q-1.600 0-1.600-1.600v-1.600"/>
<path d="M30.200 674.400l3.600 2v4.200l-3.600 2-3.600-2v-4.200zM26.600 676.400l3.600 2 3.600-2M30.200 678.400v4.200"/>
</g>
<text x="5.8" y="691.3" font-size="7.5" fill="#c46464">x</text>
<rect x="773" y="0" width="153" height="278.6" fill="rgba(34,34,34,0.8)"/>
<rect x="773" y="0" width="153" height="13" fill="#2c2c2c"/>
<rect x="831.2" y="13.8" width="94.8" height="10.9" fill="#303030"/>
<text x="776.9" y="8.6" font-size="8.4" font-weight="bold" stroke="#f2f2f2" stroke-width="0.2" fill="#f2f2f2" textLength="49.6" lengthAdjust="spacingAndGlyphs">Slicing Result</text>
<text x="776.9" y="21.6" font-size="8.4" font-weight="bold" stroke="#f2f2f2" stroke-width="0.2" fill="#f2f2f2" textLength="50.4" lengthAdjust="spacingAndGlyphs">Color Scheme</text>
<path d="M834 18.6l2.6 2.2 2.600-2.200" fill="none" stroke="#d0d0d0" stroke-width="0.7"/>
<text x="843.8" y="22.8" font-size="8.2" stroke="#f2f2f2" stroke-width="0.18" fill="#f2f2f2" textLength="30.2" lengthAdjust="spacingAndGlyphs">Filament</text>
<text x="776.9" y="34" font-size="8.4" font-weight="bold" stroke="#f2f2f2" stroke-width="0.2" fill="#f2f2f2" textLength="31.4" lengthAdjust="spacingAndGlyphs">Filament</text>
<text x="812.7" y="34" font-size="8.4" font-weight="bold" stroke="#f2f2f2" stroke-width="0.2" fill="#f2f2f2" textLength="22.4" lengthAdjust="spacingAndGlyphs">Model</text>
<text x="852" y="34" font-size="8.4" font-weight="bold" stroke="#f2f2f2" stroke-width="0.2" fill="#f2f2f2" textLength="30.1" lengthAdjust="spacingAndGlyphs">Support</text>
<text x="892.5" y="34" font-size="8.4" font-weight="bold" stroke="#f2f2f2" stroke-width="0.2" fill="#f2f2f2" textLength="28.1" lengthAdjust="spacingAndGlyphs">Flushed</text>
<path d="M774 36.8H926" stroke="#6e6e6e" stroke-width="0.8"/>
<rect x="777.2" y="39.7" width="5.8" height="5.8" fill="#808080"/>
<text x="785.9" y="45.8" font-size="8.2" stroke="#f2f2f2" stroke-width="0.18" fill="#f2f2f2" textLength="3.5" lengthAdjust="spacingAndGlyphs">1</text>
<text x="812.7" y="45.8" font-size="8.2" stroke="#f2f2f2" stroke-width="0.18" fill="#f2f2f2" textLength="23.5" lengthAdjust="spacingAndGlyphs">0.18 m</text>
<text x="852" y="45.8" font-size="8.2" stroke="#f2f2f2" stroke-width="0.18" fill="#f2f2f2" textLength="23.5" lengthAdjust="spacingAndGlyphs">0.00 m</text>
<text x="892.5" y="45.8" font-size="8.2" stroke="#f2f2f2" stroke-width="0.18" fill="#f2f2f2" textLength="23.5" lengthAdjust="spacingAndGlyphs">0.97 m</text>
<text x="812.7" y="55.1" font-size="8.2" stroke="#f2f2f2" stroke-width="0.18" fill="#f2f2f2" textLength="21.4" lengthAdjust="spacingAndGlyphs">0.54 g</text>
<text x="852" y="55.1" font-size="8.2" stroke="#f2f2f2" stroke-width="0.18" fill="#f2f2f2" textLength="21.4" lengthAdjust="spacingAndGlyphs">0.00 g</text>
<text x="892.5" y="55.1" font-size="8.2" stroke="#f2f2f2" stroke-width="0.18" fill="#f2f2f2" textLength="21.4" lengthAdjust="spacingAndGlyphs">2.95 g</text>
<rect x="777.2" y="60.4" width="5.8" height="5.8" fill="#ffff00"/>
<text x="785.9" y="66.5" font-size="8.2" stroke="#f2f2f2" stroke-width="0.18" fill="#f2f2f2" textLength="3.5" lengthAdjust="spacingAndGlyphs">2</text>
<text x="812.7" y="66.5" font-size="8.2" stroke="#f2f2f2" stroke-width="0.18" fill="#f2f2f2" textLength="23.5" lengthAdjust="spacingAndGlyphs">0.48 m</text>
<text x="852" y="66.5" font-size="8.2" stroke="#f2f2f2" stroke-width="0.18" fill="#f2f2f2" textLength="23.5" lengthAdjust="spacingAndGlyphs">0.00 m</text>
<text x="892.5" y="66.5" font-size="8.2" stroke="#f2f2f2" stroke-width="0.18" fill="#f2f2f2" textLength="23.5" lengthAdjust="spacingAndGlyphs">1.11 m</text>
<text x="812.7" y="75.8" font-size="8.2" stroke="#f2f2f2" stroke-width="0.18" fill="#f2f2f2" textLength="21.4" lengthAdjust="spacingAndGlyphs">1.45 g</text>
<text x="852" y="75.8" font-size="8.2" stroke="#f2f2f2" stroke-width="0.18" fill="#f2f2f2" textLength="21.4" lengthAdjust="spacingAndGlyphs">0.00 g</text>
<text x="892.5" y="75.8" font-size="8.2" stroke="#f2f2f2" stroke-width="0.18" fill="#f2f2f2" textLength="21.4" lengthAdjust="spacingAndGlyphs">3.38 g</text>
<rect x="777.2" y="80.6" width="5.8" height="5.8" fill="#3a3a3a"/>
<text x="785.9" y="86.7" font-size="8.2" stroke="#f2f2f2" stroke-width="0.18" fill="#f2f2f2" textLength="3.5" lengthAdjust="spacingAndGlyphs">3</text>
<text x="812.7" y="86.7" font-size="8.2" stroke="#f2f2f2" stroke-width="0.18" fill="#f2f2f2" textLength="23.5" lengthAdjust="spacingAndGlyphs">0.21 m</text>
<text x="852" y="86.7" font-size="8.2" stroke="#f2f2f2" stroke-width="0.18" fill="#f2f2f2" textLength="23.5" lengthAdjust="spacingAndGlyphs">0.18 m</text>
<text x="892.5" y="86.7" font-size="8.2" stroke="#f2f2f2" stroke-width="0.18" fill="#f2f2f2" textLength="23.5" lengthAdjust="spacingAndGlyphs">1.35 m</text>
<text x="812.7" y="96" font-size="8.2" stroke="#f2f2f2" stroke-width="0.18" fill="#f2f2f2" textLength="21.4" lengthAdjust="spacingAndGlyphs">0.62 g</text>
<text x="852" y="96" font-size="8.2" stroke="#f2f2f2" stroke-width="0.18" fill="#f2f2f2" textLength="21.4" lengthAdjust="spacingAndGlyphs">0.53 g</text>
<text x="892.5" y="96" font-size="8.2" stroke="#f2f2f2" stroke-width="0.18" fill="#f2f2f2" textLength="21.4" lengthAdjust="spacingAndGlyphs">4.10 g</text>
<rect x="777.2" y="100.8" width="5.8" height="5.8" fill="#ffffff"/>
<text x="785.9" y="106.9" font-size="8.2" stroke="#f2f2f2" stroke-width="0.18" fill="#f2f2f2" textLength="3.5" lengthAdjust="spacingAndGlyphs">4</text>
<text x="812.7" y="106.9" font-size="8.2" stroke="#f2f2f2" stroke-width="0.18" fill="#f2f2f2" textLength="23.5" lengthAdjust="spacingAndGlyphs">3.22 m</text>
<text x="852" y="106.9" font-size="8.2" stroke="#f2f2f2" stroke-width="0.18" fill="#f2f2f2" textLength="23.5" lengthAdjust="spacingAndGlyphs">0.00 m</text>
<text x="892.5" y="106.9" font-size="8.2" stroke="#f2f2f2" stroke-width="0.18" fill="#f2f2f2" textLength="23.5" lengthAdjust="spacingAndGlyphs">1.98 m</text>
<text x="812.7" y="116.2" font-size="8.2" stroke="#f2f2f2" stroke-width="0.18" fill="#f2f2f2" textLength="21.4" lengthAdjust="spacingAndGlyphs">9.76 g</text>
<text x="852" y="116.2" font-size="8.2" stroke="#f2f2f2" stroke-width="0.18" fill="#f2f2f2" textLength="21.4" lengthAdjust="spacingAndGlyphs">0.00 g</text>
<text x="892.5" y="116.2" font-size="8.2" stroke="#f2f2f2" stroke-width="0.18" fill="#f2f2f2" textLength="21.4" lengthAdjust="spacingAndGlyphs">5.99 g</text>
<path d="M774 120.2H926" stroke="#6e6e6e" stroke-width="0.8"/>
<text x="776.9" y="128.9" font-size="8.2" stroke="#f2f2f2" stroke-width="0.18" fill="#f2f2f2" textLength="17.4" lengthAdjust="spacingAndGlyphs">Total</text>
<text x="812.7" y="128.9" font-size="8.2" stroke="#f2f2f2" stroke-width="0.18" fill="#f2f2f2" textLength="23.5" lengthAdjust="spacingAndGlyphs">4.08 m</text>
<text x="852" y="128.9" font-size="8.2" stroke="#f2f2f2" stroke-width="0.18" fill="#f2f2f2" textLength="23.5" lengthAdjust="spacingAndGlyphs">0.18 m</text>
<text x="892.5" y="128.9" font-size="8.2" stroke="#f2f2f2" stroke-width="0.18" fill="#f2f2f2" textLength="23.5" lengthAdjust="spacingAndGlyphs">5.42 m</text>
<text x="812.7" y="138.1" font-size="8.2" stroke="#f2f2f2" stroke-width="0.18" fill="#f2f2f2" textLength="25.7" lengthAdjust="spacingAndGlyphs">12.38 g</text>
<text x="852" y="138.1" font-size="8.2" stroke="#f2f2f2" stroke-width="0.18" fill="#f2f2f2" textLength="21.4" lengthAdjust="spacingAndGlyphs">0.53 g</text>
<text x="892.5" y="138.1" font-size="8.2" stroke="#f2f2f2" stroke-width="0.18" fill="#f2f2f2" textLength="25.7" lengthAdjust="spacingAndGlyphs">16.41 g</text>
<text x="776.9" y="149.3" font-size="8.2" stroke="#f2f2f2" stroke-width="0.18" fill="#f2f2f2" textLength="94.2" lengthAdjust="spacingAndGlyphs">Filament change times: 93</text>
<text x="776.9" y="159.6" font-size="8.2" stroke="#f2f2f2" stroke-width="0.18" fill="#f2f2f2" textLength="36.1" lengthAdjust="spacingAndGlyphs">Cost: 0.86</text>
<text x="776.9" y="173.8" font-size="8.4" font-weight="bold" stroke="#f2f2f2" stroke-width="0.2" fill="#f2f2f2" textLength="59.6" lengthAdjust="spacingAndGlyphs">Time Estimation</text>
<path d="M774 177.4H926" stroke="#6e6e6e" stroke-width="0.8"/>
<text x="776.9" y="185.9" font-size="8.2" stroke="#f2f2f2" stroke-width="0.18" fill="#f2f2f2" textLength="99.7" lengthAdjust="spacingAndGlyphs">Prepare and timelapse time:</text>
<text x="878" y="185.9" font-size="8.2" stroke="#f2f2f2" stroke-width="0.18" fill="#f2f2f2" textLength="51.2" lengthAdjust="spacingAndGlyphs">6m7s + 1m45s</text>
<text x="776.9" y="196" font-size="8.2" stroke="#f2f2f2" stroke-width="0.18" fill="#f2f2f2" textLength="72" lengthAdjust="spacingAndGlyphs">Model printing time:</text>
<text x="878" y="196" font-size="8.2" stroke="#f2f2f2" stroke-width="0.18" fill="#f2f2f2" textLength="24.2" lengthAdjust="spacingAndGlyphs">2h56m</text>
<text x="776.9" y="206.1" font-size="8.2" stroke="#f2f2f2" stroke-width="0.18" fill="#f2f2f2" textLength="37.1" lengthAdjust="spacingAndGlyphs">Total time:</text>
<text x="878" y="206.1" font-size="8.2" stroke="#f2f2f2" stroke-width="0.18" fill="#f2f2f2" textLength="19.7" lengthAdjust="spacingAndGlyphs">3h3m</text>
<text x="776.9" y="218.2" font-size="8.4" font-weight="bold" stroke="#f2f2f2" stroke-width="0.2" fill="#f2f2f2" textLength="29.2" lengthAdjust="spacingAndGlyphs">Options</text>
<text x="892.5" y="218.2" font-size="8.4" font-weight="bold" stroke="#f2f2f2" stroke-width="0.2" fill="#f2f2f2" textLength="26.9" lengthAdjust="spacingAndGlyphs">Display</text>
<path d="M774 221.7H926" stroke="#6e6e6e" stroke-width="0.8"/>
<rect x="777.2" y="224" width="5.8" height="5.6" fill="#38489b"/>
<text x="785.9" y="230.1" font-size="8.2" stroke="#f2f2f2" stroke-width="0.18" fill="#f2f2f2" textLength="21.6" lengthAdjust="spacingAndGlyphs">Travel</text>
<rect x="893.9" y="222.7" width="8.9" height="8.8" fill="rgba(255,255,255,0.09)"/>
<rect x="777.2" y="235.2" width="5.8" height="5.6" fill="#cd22d6"/>
<text x="785.9" y="241.2" font-size="8.2" stroke="#f2f2f2" stroke-width="0.18" fill="#f2f2f2" textLength="25.9" lengthAdjust="spacingAndGlyphs">Retract</text>
<rect x="893.9" y="233.8" width="8.9" height="8.8" fill="rgba(255,255,255,0.09)"/>
<rect x="777.2" y="246.3" width="5.8" height="5.6" fill="#49add0"/>
<text x="785.9" y="252.4" font-size="8.2" stroke="#f2f2f2" stroke-width="0.18" fill="#f2f2f2" textLength="34" lengthAdjust="spacingAndGlyphs">Unretract</text>
<rect x="893.9" y="245" width="8.9" height="8.8" fill="rgba(255,255,255,0.09)"/>
<rect x="777.2" y="257.4" width="5.8" height="5.6" fill="#ffff00"/>
<text x="785.9" y="263.6" font-size="8.2" stroke="#f2f2f2" stroke-width="0.18" fill="#f2f2f2" textLength="18.1" lengthAdjust="spacingAndGlyphs">Wipe</text>
<rect x="893.9" y="256.2" width="8.9" height="8.8" fill="rgba(255,255,255,0.09)"/>
<rect x="777.2" y="268.6" width="5.8" height="5.6" fill="#e6e6e6"/>
<text x="785.9" y="274.7" font-size="8.2" stroke="#f2f2f2" stroke-width="0.18" fill="#f2f2f2" textLength="23" lengthAdjust="spacingAndGlyphs">Seams</text>
<rect x="893.9" y="267.3" width="8.9" height="8.8" fill="rgba(255,255,255,0.09)"/>
<path d="M895.6 271.3l2.200 2.300 3.800-4.600" fill="none" stroke="#00ae42" stroke-width="1.2"/>
</svg>
</body></html>
